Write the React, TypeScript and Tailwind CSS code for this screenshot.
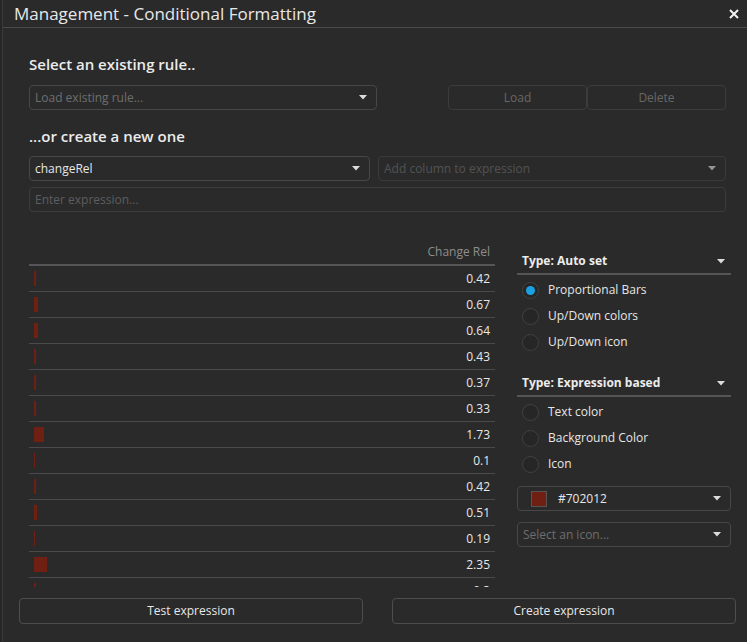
import React from "react";

const rows = [0.42, 0.67, 0.64, 0.43, 0.37, 0.33, 1.73, 0.1, 0.42, 0.51, 0.19, 2.35, 0.3];

function Caret() {
  return (
    <svg width="8" height="5" viewBox="0 0 8 5" className="shrink-0">
      <path d="M0 0 L8 0 L4 4.5 Z" fill="#dcdcdc" />
    </svg>
  );
}

function Select({
  text,
  placeholder,
  swatch,
}: {
  text: string;
  placeholder?: boolean;
  swatch?: string;
}) {
  return (
    <div className="flex h-[25px] items-center justify-between rounded-[4px] border border-[#474747] pl-[5px] pr-[9px]">
      <div className="flex items-center">
        {swatch && (
          <span
            className="ml-[8px] mr-[11px] h-[16px] w-[16px] border border-[#555]"
            style={{ background: swatch }}
          />
        )}
        <span className={`text-[12px] ${placeholder ? "text-[#6e6e6e]" : "text-[#e6e6e6]"}`}>
          {text}
        </span>
      </div>
      <Caret />
    </div>
  );
}

function Radio({ label, checked }: { label: string; checked?: boolean }) {
  return (
    <div className="flex h-[26px] items-center pl-[5px]">
      <span className="flex h-[17px] w-[17px] items-center justify-center rounded-full border border-[#424242] bg-[#262626]">
        {checked && <span className="h-[9px] w-[9px] rounded-full bg-[#1ba1e2]" />}
      </span>
      <span className="ml-[9px] text-[12px] text-[#e6e6e6]">{label}</span>
    </div>
  );
}

function GroupHead({ title }: { title: string }) {
  return (
    <div className="flex h-[26px] items-center justify-between border-b-2 border-[#555] pl-[5px] pr-[6px]">
      <span className="text-[12px] font-bold text-[#ececec]">{title}</span>
      <Caret />
    </div>
  );
}

export default function App() {
  return (
    <div
      className="flex h-[642px] w-[747px] overflow-hidden bg-[#2a2a2a]"
      style={{ fontFamily: '"Open Sans", "Noto Sans", sans-serif' }}
    >
      {/* left edge of the window behind */}
      <div className="w-[3px] shrink-0 border-r border-[#3a3a3a] bg-[#262626]" />

      <div className="flex min-w-0 flex-1 flex-col">
        {/* Title bar */}
        <div className="flex h-[28px] shrink-0 items-center justify-between border-b border-[#4a4a4a] pl-[11px] pr-[8px]">
          <span className="text-[17px] leading-none text-[#e8e8e8]">
            Management - Conditional Formatting
          </span>
          <svg width="10" height="10" viewBox="0 0 10 10">
            <path d="M1 1 L9 9 M9 1 L1 9" stroke="#f2f2f2" strokeWidth="2" />
          </svg>
        </div>

        <div className="flex flex-1 flex-col pl-[26px] pr-[21px]">
          <h2 className="mt-[26px] text-[15px] font-semibold leading-[20px] text-[#ececec]">
            Select an existing rule..
          </h2>
          <div className="mt-[11px] flex">
            <div className="w-[348px]">
              <Select text="Load existing rule..." placeholder />
            </div>
            <div className="ml-[71px] flex">
              <button className="h-[25px] w-[139px] rounded-[4px] border border-[#3c3c3c] text-[12px] text-[#676767]">
                Load
              </button>
              <button className="h-[25px] w-[139px] rounded-[4px] border border-[#3c3c3c] text-[12px] text-[#676767]">
                Delete
              </button>
            </div>
          </div>

          <h2 className="mt-[16px] text-[15px] font-semibold leading-[20px] text-[#ececec]">
            ...or create a new one
          </h2>
          <div className="mt-[10px] flex gap-[8px]">
            <div className="w-[341px]">
              <Select text="changeRel" />
            </div>
            <div className="flex-1 opacity-60">
              <Select text="Add column to expression" placeholder />
            </div>
          </div>
          <div className="mt-[6px] flex h-[25px] items-center rounded-[4px] border border-[#3c3c3c] px-[5px] text-[12px] text-[#5e5e5e]">
            Enter expression...
          </div>

          <div className="mr-[-5px] mt-[28px] flex gap-[22px]">
            {/* Table */}
            <div className="h-[347px] w-[466px] shrink-0 overflow-hidden">
              <div className="flex h-[26px] items-center justify-end border-b-2 border-[#555] pr-[5px] text-[12px] text-[#8e8e8e]">
                Change Rel
              </div>
              {rows.map((v, i) => (
                <div
                  key={i}
                  className="flex h-[26px] items-center justify-between border-b border-[#4a4a4a] pl-[5px] pr-[5px]"
                >
                  <span
                    className="h-[15px] bg-[#702012]"
                    style={{ width: Math.max(1, Math.round(v * 5.5)) }}
                  />
                  <span className="text-[12px] text-[#e8e8e8]">{v}</span>
                </div>
              ))}
            </div>

            {/* Options */}
            <div className="mt-[9px] w-[214px] shrink-0">
              <GroupHead title="Type: Auto set" />
              <div className="mt-[2px]">
                <Radio label="Proportional Bars" checked />
                <Radio label="Up/Down colors" />
                <Radio label="Up/Down icon" />
              </div>
              <div className="mt-[16px]">
                <GroupHead title="Type: Expression based" />
              </div>
              <div className="mt-[2px]">
                <Radio label="Text color" />
                <Radio label="Background Color" />
                <Radio label="Icon" />
              </div>
              <div className="mt-[9px]">
                <Select text="#702012" swatch="#702012" />
              </div>
              <div className="mt-[11px]">
                <Select text="Select an icon..." placeholder />
              </div>
            </div>
          </div>
        </div>

        {/* Bottom buttons */}
        <div className="mb-[18px] flex shrink-0 gap-[29px] pl-[16px]">
          <button className="h-[26px] w-[344px] rounded-[4px] border border-[#4e4e4e] text-[12px] text-[#e8e8e8]">
            Test expression
          </button>
          <button className="h-[26px] w-[344px] rounded-[4px] border border-[#4e4e4e] text-[12px] text-[#e8e8e8]">
            Create expression
          </button>
        </div>
      </div>
    </div>
  );
}
